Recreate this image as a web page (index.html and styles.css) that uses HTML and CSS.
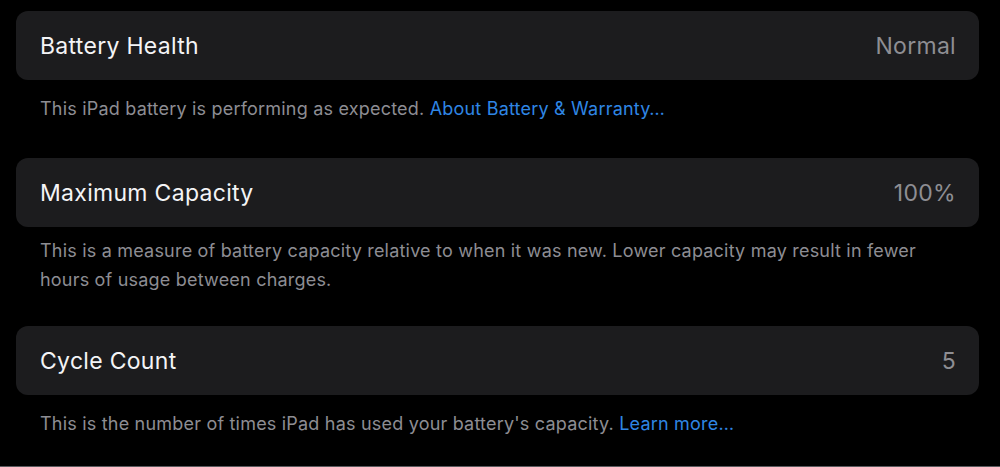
FILE: index.html
```html
<!DOCTYPE html>
<html lang="en">
<head>
<meta charset="utf-8">
<title>Battery</title>
<link rel="stylesheet" href="styles.css">
</head>
<body>
<main class="page">
  <section class="group">
    <div class="card">
      <span class="label">Battery Health</span>
      <span class="value">Normal</span>
    </div>
    <p class="footer">This iPad battery is performing as expected. <a class="link" href="#">About Battery &amp; Warranty…</a></p>
  </section>
  <section class="group">
    <div class="card">
      <span class="label">Maximum Capacity</span>
      <span class="value">100%</span>
    </div>
    <p class="footer footer--multi">This is a measure of battery capacity relative to when it was new. Lower capacity may result in fewer hours of usage between charges.</p>
  </section>
  <section class="group">
    <div class="card">
      <span class="label">Cycle Count</span>
      <span class="value">5</span>
    </div>
    <p class="footer">This is the number of times iPad has used your battery's capacity. <a class="link" href="#">Learn more…</a></p>
  </section>
</main>
</body>
</html>
```

FILE: styles.css
```css
html, body {
  margin: 0;
  padding: 0;
  background: #000;
}
body {
  font-family: Inter, "Noto Sans", "Liberation Sans", sans-serif;
  -webkit-font-smoothing: antialiased;
}
.page {
  box-sizing: border-box;
  height: 467px;
  padding: 11px 21px 0 16px;
  border-bottom: 1px solid #5a5a5e;
  overflow: hidden;
}
.group {
  display: flex;
  flex-direction: column;
}
.card {
  display: flex;
  align-items: center;
  justify-content: space-between;
  height: 69px;
  padding: 0 23px 0 24px;
  background: #1c1c1e;
  border-radius: 12px;
}
.label {
  color: #f4f4f6;
  font-size: 23px;
  font-weight: 400;
  letter-spacing: 0.3px;
}
.value {
  color: #8e8e93;
  font-size: 23px;
  letter-spacing: 0.3px;
}
.footer {
  margin: 0;
  padding: 14px 36px 35px 24px;
  color: #8d8d93;
  font-size: 18px;
  line-height: 29px;
  letter-spacing: 0.2px;
}
.footer--multi {
  padding-top: 9px;
  padding-bottom: 32px;
}
.link {
  color: #2f86e4;
  text-decoration: none;
}
```
